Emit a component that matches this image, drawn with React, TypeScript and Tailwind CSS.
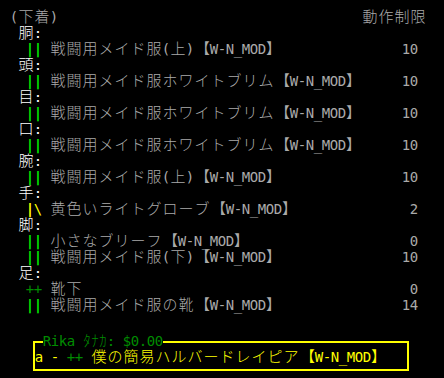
import clsx from 'clsx'

const GREEN = 'text-[#00e600]'
const DARK_GREEN = 'text-[#008c00]'
const YELLOW = 'text-[#ffff00]'
const GRAY = 'text-[#aaaaaa]'
const WHITE = 'text-white'

type Item = {
  mark: string
  markColor: string
  name: string
  mod?: boolean
  enc: number
}

type Slot = {
  part: string
  items: Item[]
}

const bar = { mark: '||', markColor: GREEN }

const slots: Slot[] = [
  { part: '胴', items: [{ ...bar, name: '戦闘用メイド服(上)', mod: true, enc: 10 }] },
  { part: '頭', items: [{ ...bar, name: '戦闘用メイド服ホワイトブリム', mod: true, enc: 10 }] },
  { part: '目', items: [{ ...bar, name: '戦闘用メイド服ホワイトブリム', mod: true, enc: 10 }] },
  { part: '口', items: [{ ...bar, name: '戦闘用メイド服ホワイトブリム', mod: true, enc: 10 }] },
  { part: '腕', items: [{ ...bar, name: '戦闘用メイド服(上)', mod: true, enc: 10 }] },
  { part: '手', items: [{ mark: '|\\', markColor: YELLOW, name: '黄色いライトグローブ', mod: true, enc: 2 }] },
  {
    part: '脚',
    items: [
      { ...bar, name: '小さなブリーフ', mod: true, enc: 0 },
      { ...bar, name: '戦闘用メイド服(下)', mod: true, enc: 10 },
    ],
  },
  {
    part: '足',
    items: [
      { mark: '++', markColor: DARK_GREEN, name: '靴下', enc: 0 },
      { ...bar, name: '戦闘用メイド服の靴', mod: true, enc: 14 },
    ],
  },
]

// one terminal cell per character: 8px for half width, 16px for full width
const Cells = ({ text, className }: { text: string; className?: string }) => {
  return (
    <>
      {Array.from(text).map((ch, i) => {
        const c = ch.codePointAt(0) ?? 0
        const half = c < 0x1100 || (c >= 0xff61 && c <= 0xff9f) || ch === '【' || ch === '】'
        return (
          <span
            key={i}
            className={clsx(
              'flex h-[16px] shrink-0 whitespace-pre leading-[16px]',
              half ? 'w-[8px]' : 'w-[16px]',
              c >= 0x1100 && 'text-[15px] font-light',
              ch === '【' ? 'justify-end' : ch === '】' ? 'justify-start' : 'justify-center',
              ch === '|' && 'font-bold',
              className
            )}
          >
            {ch}
          </span>
        )
      })}
    </>
  )
}

const Row = ({ children }: { children: React.ReactNode }) => (
  <div className="flex h-[16px] w-[424px] items-center">{children}</div>
)

export default function App() {
  return (
    <div className="h-[378px] w-[444px] overflow-hidden bg-black pl-[2px] pt-[9px] text-[14px] font-[family-name:'DejaVu_Sans_Mono','Noto_Sans_CJK_JP',monospace]">
      <Row>
        <span className="w-[8px]" />
        <Cells text="(下着)" className={GRAY} />
        <span className="ml-auto flex">
          <Cells text="動作制限" className={GRAY} />
        </span>
      </Row>

      {slots.map((slot) => (
        <div key={slot.part}>
          <Row>
            <span className="w-[16px]" />
            <Cells text={slot.part + ':'} className={WHITE} />
          </Row>
          {slot.items.map((item, idx) => (
            <Row key={idx}>
              <span className="w-[24px]" />
              <Cells text={item.mark + ' '} className={item.markColor} />
              <Cells text={item.name} className={GRAY} />
              {item.mod && <Cells text=" 【W-N_MOD】" className={GRAY} />}
              <span className="ml-auto mr-[8px] flex">
                <Cells text={String(item.enc)} className={GRAY} />
              </span>
            </Row>
          ))}
        </div>
      ))}

      <div className="ml-[31px] mt-[28px] w-[376px] border-2 border-[#ffff00] pb-[4px]">
        <div className="-mt-[10px] ml-[8px] flex w-fit bg-black">
          <Cells text="Rika ﾀﾅｶ: $0.00" className={DARK_GREEN} />
        </div>
        <div className="flex h-[16px]">
          <Cells text="a - " className={YELLOW} />
          <Cells text="++ " className={DARK_GREEN} />
          <Cells text="僕の簡易ハルバードレイピア 【W-N_MOD】" className={YELLOW} />
        </div>
      </div>
    </div>
  )
}
